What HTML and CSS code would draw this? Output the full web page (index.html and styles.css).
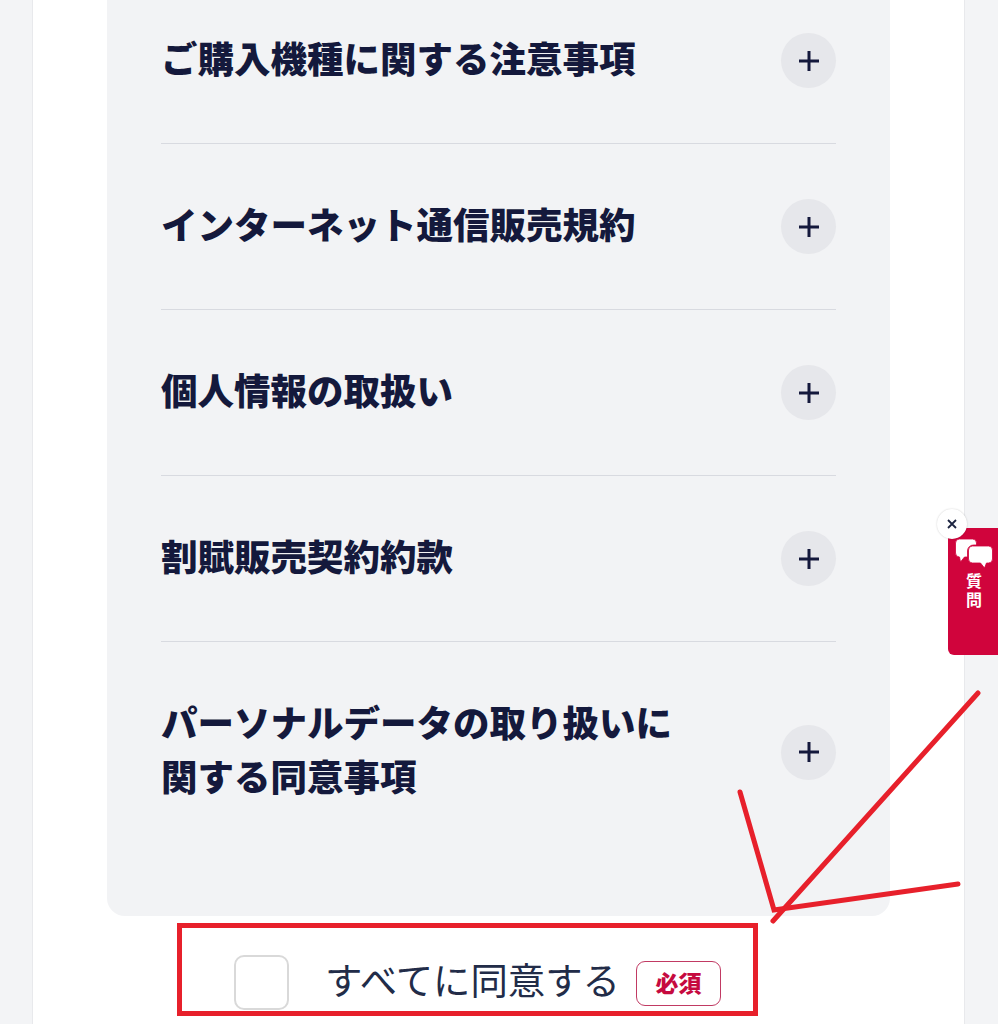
FILE: index.html
```html
<!DOCTYPE html>
<html lang="ja">
<head>
<meta charset="utf-8">
<title>同意事項</title>
<link rel="stylesheet" href="styles.css">
</head>
<body>
<main class="page">
  <section class="panel">
    <div class="row"><h2 class="row-title">ご購入機種に関する注意事項</h2><span class="toggle"><svg viewBox="0 0 22 22" class="plus"><path d="M11 1v20M1 11h20"/></svg></span></div>
    <div class="row"><h2 class="row-title">インターネット通信販売規約</h2><span class="toggle"><svg viewBox="0 0 22 22" class="plus"><path d="M11 1v20M1 11h20"/></svg></span></div>
    <div class="row"><h2 class="row-title">個人情報の取扱い</h2><span class="toggle"><svg viewBox="0 0 22 22" class="plus"><path d="M11 1v20M1 11h20"/></svg></span></div>
    <div class="row"><h2 class="row-title">割賦販売契約約款</h2><span class="toggle"><svg viewBox="0 0 22 22" class="plus"><path d="M11 1v20M1 11h20"/></svg></span></div>
    <div class="row row-last"><h2 class="row-title">パーソナルデータの取り扱いに<br>関する同意事項</h2><span class="toggle"><svg viewBox="0 0 22 22" class="plus"><path d="M11 1v20M1 11h20"/></svg></span></div>
  </section>
  <label class="agree">
    <span class="checkbox"></span>
    <span class="agree-text">すべてに同意する</span>
    <span class="badge">必須</span>
  </label>
</main>

<aside class="help-tab">
  <svg class="help-icon" viewBox="0 0 38 30">
    <path class="bubble" d="M5 1h13a4 4 0 0 1 4 4v2h-3a6 6 0 0 0-6 6v6h-3l-4 5-1-5H5a4 4 0 0 1-4-4V5a4 4 0 0 1 4-4z"/>
    <path class="bubble" d="M18 8h16a4 4 0 0 1 4 4v9a4 4 0 0 1-4 4h-2l-2 5-4-5h-8a4 4 0 0 1-4-4v-9a4 4 0 0 1 4-4z"/>
  </svg>
  <span class="help-label">質問</span>
</aside>
<span class="help-close"><svg viewBox="0 0 10 10"><path d="M1 1l8 8M9 1l-8 8"/></svg></span>

<div class="mark-box"></div>
<svg class="mark-arrow" viewBox="0 0 998 1024">
  <path d="M978 693L773 921"/>
  <path d="M740 792L774 910L958 884"/>
</svg>
</body>
</html>
```

FILE: styles.css
```css
html, body {
  margin: 0;
  height: 1024px;
  overflow: hidden;
  background: #f3f4f6;
}
body {
  font-family: "Noto Sans CJK JP", "Noto Sans", sans-serif;
  color: #14193c;
}
.page {
  box-sizing: border-box;
  width: 933px;
  height: 1046px;
  margin: -22px 0 0 32px;
  padding: 0 74px;
  background: #fff;
  border-left: 1px solid #e8e9ec;
  border-right: 1px solid #e8e9ec;
}
.panel {
  background: #f2f3f5;
  border-radius: 0 0 18px 18px;
  padding: 0 54px 54px;
}
.row {
  display: flex;
  align-items: center;
  justify-content: space-between;
  padding: 55px 0;
  border-bottom: 1px solid #d8dae0;
}
.row-last {
  padding: 59px 0;
  border-bottom: 0;
}
.row-title {
  margin: -6px 0 0;
  font-size: 36.5px;
  font-weight: 900;
  line-height: 54px;
  white-space: nowrap;
}
.toggle {
  display: flex;
  align-items: center;
  justify-content: center;
  width: 55px;
  height: 55px;
  border-radius: 50%;
  background: #e6e7eb;
}
.plus {
  width: 22px;
  height: 22px;
  fill: none;
  stroke: #14193c;
  stroke-width: 3;
}
.agree {
  display: flex;
  align-items: center;
  margin: 39px 0 0 127px;
}
.checkbox {
  box-sizing: border-box;
  width: 55px;
  height: 55px;
  border: 2px solid #d9d9d9;
  border-radius: 10px;
  background: #fff;
}
.agree-text {
  margin-left: 36px;
  padding-bottom: 6px;
  font-size: 37.4px;
  font-weight: 400;
  line-height: 49px;
  white-space: nowrap;
  color: #222c48;
}
.badge {
  box-sizing: border-box;
  width: 85px;
  height: 45px;
  margin: 2px 0 0 16px;
  border: 1px solid #c13a63;
  border-radius: 9px;
  font-size: 23px;
  font-weight: 900;
  line-height: 41px;
  text-align: center;
  color: #c60a3f;
}
.help-tab {
  position: absolute;
  left: 948px;
  top: 528px;
  width: 50px;
  height: 127px;
  border-radius: 6px 0 0 6px;
  background: #d0043c;
  color: #fff;
}
.help-icon {
  position: absolute;
  left: 6px;
  top: 10px;
  width: 39px;
  height: 30px;
}
.bubble {
  fill: #fff;
  stroke: #d0043c;
  stroke-width: 0.8;
}
.help-label {
  position: absolute;
  right: 0;
  top: 45px;
  writing-mode: vertical-rl;
  text-orientation: upright;
  font-size: 16px;
  font-weight: 700;
  letter-spacing: 3px;
  line-height: 48px;
}
.help-close {
  position: absolute;
  left: 937px;
  top: 509px;
  display: flex;
  align-items: center;
  justify-content: center;
  width: 30px;
  height: 30px;
  border-radius: 50%;
  background: #fff;
  box-shadow: 0 0 2px rgba(0, 0, 0, 0.2);
}
.help-close svg {
  width: 10px;
  height: 10px;
  fill: none;
  stroke: #1c2440;
  stroke-width: 1.8;
}
.mark-box {
  position: absolute;
  left: 177px;
  top: 923px;
  box-sizing: border-box;
  width: 581px;
  height: 93px;
  border: 5px solid #e7202b;
}
.mark-arrow {
  position: absolute;
  left: 0;
  top: 0;
  width: 998px;
  height: 1024px;
  fill: none;
  stroke: #e7202b;
  stroke-width: 5;
  stroke-linecap: round;
  stroke-linejoin: miter;
}
```
